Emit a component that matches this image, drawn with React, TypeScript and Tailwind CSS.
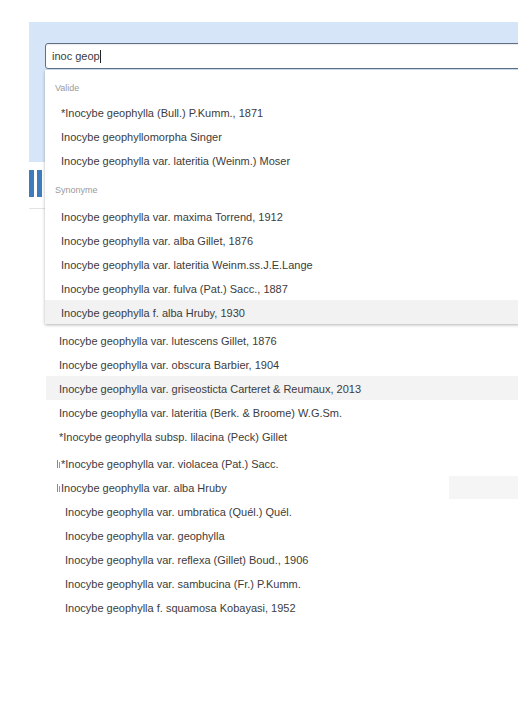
import React from "react";

const valide = [
  "*Inocybe geophylla (Bull.) P.Kumm., 1871",
  "Inocybe geophyllomorpha Singer",
  "Inocybe geophylla var. lateritia (Weinm.) Moser",
];
const synonyme = [
  "Inocybe geophylla var. maxima Torrend, 1912",
  "Inocybe geophylla var. alba Gillet, 1876",
  "Inocybe geophylla var. lateritia Weinm.ss.J.E.Lange",
  "Inocybe geophylla var. fulva (Pat.) Sacc., 1887",
  "Inocybe geophylla f. alba Hruby, 1930",
];
const list1 = [
  "Inocybe geophylla var. lutescens Gillet, 1876",
  "Inocybe geophylla var. obscura Barbier, 1904",
  "Inocybe geophylla var. griseosticta Carteret & Reumaux, 2013",
  "Inocybe geophylla var. lateritia (Berk. & Broome) W.G.Sm.",
  "*Inocybe geophylla subsp. lilacina (Peck) Gillet",
];
const list3 = [
  "Inocybe geophylla var. umbratica (Quél.) Quél.",
  "Inocybe geophylla var. geophylla",
  "Inocybe geophylla var. reflexa (Gillet) Boud., 1906",
  "Inocybe geophylla var. sambucina (Fr.) P.Kumm.",
  "Inocybe geophylla f. squamosa Kobayasi, 1952",
];

function Marker() {
  return (
    <span className="mr-[1px] inline-flex items-end gap-[1px] h-[10px] -translate-y-[2px]">
      <span className="block w-[1px] h-[8px] bg-[#8a8a8a]" />
      <span className="block w-[1px] h-[6px] bg-[#9a9a9a]" />
    </span>
  );
}

export default function App() {
  return (
    <div
      className="w-[518px] h-[720px] overflow-hidden bg-white text-[11px] text-[#3c3c3c]"
      style={{ fontFamily: '"Liberation Sans", Arial, sans-serif' }}
    >
      <div className="h-[22px]" />
      <div className="relative ml-[29px] w-[700px] h-[140px] bg-[#d6e6f8] pl-[16px] pt-[21px]">
        <div className="w-[600px] h-[26px] bg-white border border-[#5e6f86] rounded-[3px] pl-[6px] flex items-center shadow-[inset_0_1px_1px_rgba(0,0,0,0.08)]">
          <span>inoc geop</span>
          <span className="inline-block w-[1px] h-[13px] bg-[#222]" />
        </div>
        <div className="absolute z-10 top-[48px] left-[16px] w-[600px] bg-white pt-[6px] shadow-[0_1px_3px_rgba(0,0,0,0.3)]">
          <div className="h-[24px] pl-[10px] pt-[2px] flex items-center text-[9px] text-[#9a9a9a]">Valide</div>
          {valide.map((t) => (
            <div key={t} className="h-[24px] pl-[16px] pt-[2px] flex items-center">{t}</div>
          ))}
          <div className="mt-[5px] h-[27px] pl-[10px] flex items-center text-[9px] text-[#9a9a9a]">Synonyme</div>
          {synonyme.map((t, i) => (
            <div
              key={t}
              className={
                "h-[24px] pl-[16px] pt-[2px] flex items-center " +
                (i === synonyme.length - 1 ? "bg-[#f2f2f2]" : "")
              }
            >
              {t}
            </div>
          ))}
        </div>
      </div>
      <div className="ml-[29px] mt-[8px] flex gap-[3px] h-[27px]">
        <div className="w-[5px] bg-[#3d7dbd]" />
        <div className="w-[5px] bg-[#3d7dbd]" />
      </div>
      <div className="ml-[29px] mt-[11px] w-[500px] h-[1px] bg-[#e3e3e3]" />
      <div className="mt-[119px]">
        {list1.map((t, i) => (
          <div
            key={t}
            className={
              "ml-[46px] h-[24px] pl-[13px] pt-[2px] flex items-center " +
              (i === 2 ? "bg-[#f3f3f3]" : "")
            }
          >
            {t}
          </div>
        ))}
        <div className="mt-[4px] ml-[46px] h-[24px] pl-[11px] pt-[1px] flex items-center">
          <Marker />
          <span>*Inocybe geophylla var. violacea (Pat.) Sacc.</span>
        </div>
        <div className="ml-[46px] h-[24px] pl-[11px] pt-[1px] flex items-center">
          <Marker />
          <span className="flex-1">Inocybe geophylla var. alba Hruby</span>
          <div className="w-[69px] h-[23px] bg-[#f5f5f5] -mt-[3px]" />
        </div>
        {list3.map((t) => (
          <div key={t} className="ml-[46px] h-[24px] pl-[19px] pt-[1px] flex items-center">
            {t}
          </div>
        ))}
      </div>
    </div>
  );
}
